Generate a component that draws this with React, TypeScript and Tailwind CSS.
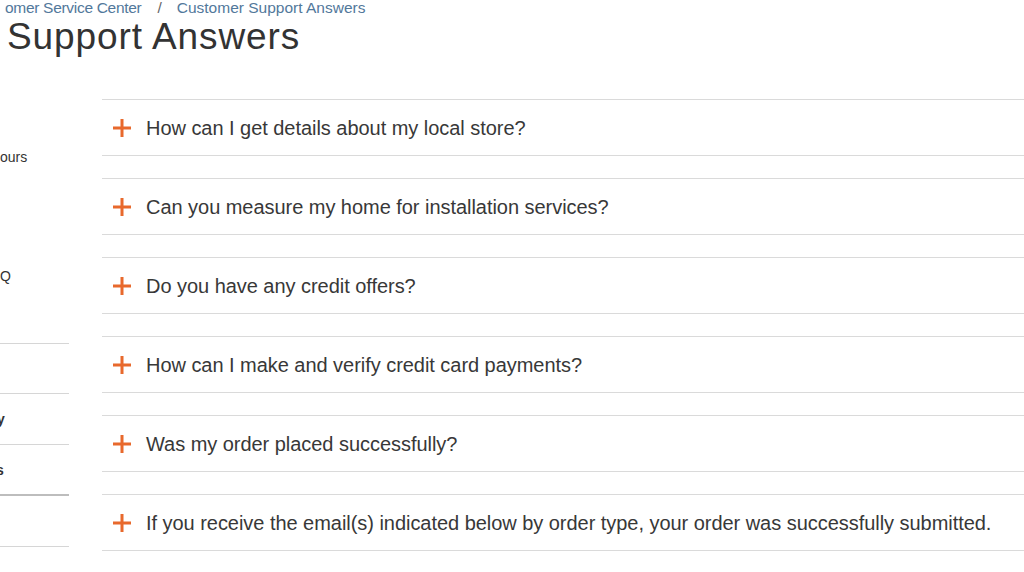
const questions = [
  "How can I get details about my local store?",
  "Can you measure my home for installation services?",
  "Do you have any credit offers?",
  "How can I make and verify credit card payments?",
  "Was my order placed successfully?",
  "If you receive the email(s) indicated below by order type, your order was successfully submitted.",
]

function PlusIcon() {
  return (
    <svg width="20" height="20" viewBox="0 0 20 20" className="shrink-0">
      <path d="M1 10h18M10 1v18" stroke="#e8692c" strokeWidth="3" />
    </svg>
  )
}

export default function App() {
  return (
    <div className="w-[1024px] h-[572px] overflow-hidden bg-white text-[#333] font-['Liberation_Sans',Arial,sans-serif]">
      <nav className="flex items-center pl-[5px] text-[15.5px] leading-[16px] text-[#52789b]">
        <span className="tracking-[-0.3px]">omer Service Center</span>
        <span className="ml-[16px] mr-[15px] text-[#666]">/</span>
        <span>Customer Support Answers</span>
      </nav>
      <h1 className="mt-[2px] pl-[7px] text-[37px] leading-[38px] tracking-[0.9px] text-[#333]">Support Answers</h1>

      <div className="mt-[43px] flex">
        <aside className="w-[69px] shrink-0 text-[14px] leading-[18px] text-[#333]">
          <div className="pt-[49px]">ours</div>
          <div className="mt-[101px]">Q</div>
          <ul className="mt-[58px] border-t border-[#d6d6d6]">
            <li className="h-[50px] border-b border-[#d6d6d6]" />
            <li className="flex h-[51px] items-center border-b border-[#d6d6d6] font-bold">
              <span className="-ml-[3px]">y</span>
            </li>
            <li className="flex h-[51px] items-center border-b-2 border-[#bdbdbd] font-bold">
              <span className="-ml-[4px]">s</span>
            </li>
            <li className="h-[51px] border-b border-[#d6d6d6]" />
          </ul>
        </aside>

        <section className="ml-[33px] flex-1">
          <ul>
            {questions.map((q) => (
              <li
                key={q}
                className="mb-[22px] flex h-[57px] items-center gap-[14px] border-y border-[#dadada] pl-[10px] whitespace-nowrap"
              >
                <PlusIcon />
                <span className="text-[20px] leading-[24px] tracking-[-0.04px] text-[#383838]">{q}</span>
              </li>
            ))}
          </ul>
        </section>
      </div>
    </div>
  )
}
